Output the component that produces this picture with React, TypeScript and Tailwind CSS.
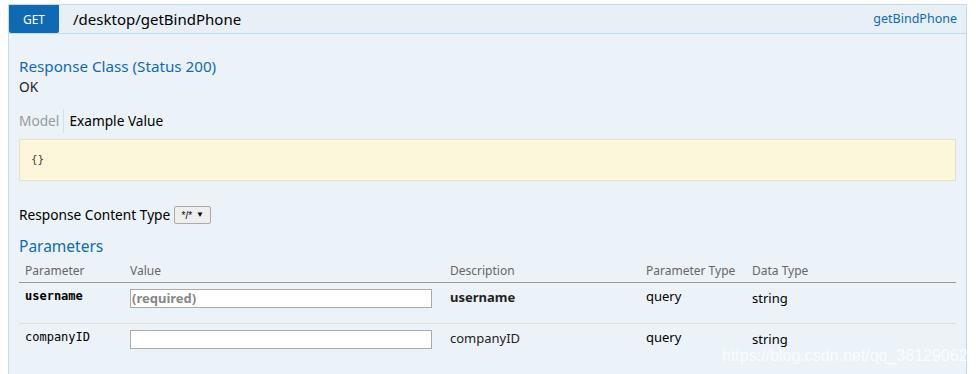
import React from "react";

const sans = { fontFamily: '"Noto Sans", "Open Sans", sans-serif' };

export default function App() {
  return (
    <div className="relative w-[976px] h-[374px] overflow-hidden bg-white pl-[8px] pt-[4px]" style={sans}>
      <div className="w-[959px] flex flex-col h-[372px]">
        {/* header */}
        <div className="h-[30px] border border-[#c3d9ec] bg-[#e7f0f7] flex items-stretch">
          <div className="w-[50px] bg-[#0f6ab4] rounded-bl-[2px] rounded-br-[2px] text-white text-[12px] flex items-center justify-center pt-[1px]">
            GET
          </div>
          <div className="flex-1 flex items-center pl-[14px] text-[15px] text-black leading-none">/desktop/getBindPhone</div>
          <div className="flex items-center pr-[9px] text-[12.5px] text-[#0f6ab4]">getBindPhone</div>
        </div>
        {/* body */}
        <div className="flex-1 border-x border-b border-[#c3d9ec] bg-[#ebf3f9] px-[10px]">
          <div className="mt-[22px] h-[20px] leading-[20px] text-[15.2px] text-[#0f6ab4]">Response Class (Status 200)</div>
          <div className="mt-[2px] h-[18px] leading-[18px] text-[13.7px] text-[#222]">OK</div>
          <div className="mt-[13px] h-[24px] flex items-center text-[13.7px]">
            <span className="text-[#999] pr-[4px]">Model</span>
            <span className="h-[24px] border-l border-[#ddd]" />
            <span className="pl-[5px] text-black">Example Value</span>
          </div>
          <div className="mt-[6px] h-[42px] bg-[#fcf6db] border border-[#e5e0c6] flex items-center pl-[11px] text-[11px] text-[#444]" style={{ fontFamily: '"DejaVu Sans Mono", monospace' }}>
            {"{}"}
          </div>
          <div className="mt-[24px] h-[20px] flex items-center text-[13.7px] text-black">
            <span>Response Content Type</span>
            <span className="ml-[4px] h-[18px] w-[37px] border border-[#aaa] rounded-[2px] bg-[#eee] flex items-center justify-center gap-[4px] text-[10px] text-black" style={{ fontFamily: '"Liberation Sans", sans-serif' }}>
              <span>*/*</span>
              <span className="text-[8px]">▼</span>
            </span>
          </div>
          <div className="mt-[10px] h-[22px] leading-[22px] text-[15.5px] text-[#0f6ab4]">Parameters</div>
          <div className="mt-[2px]">
            <div className="grid grid-cols-[105px_320px_196px_106px_1fr] h-[24px] items-center border-b border-[#999] text-[12px] text-[#666]">
              <div className="px-[6px]">Parameter</div>
              <div className="px-[6px]">Value</div>
              <div className="px-[6px]">Description</div>
              <div className="px-[6px]">Parameter Type</div>
              <div className="px-[6px]">Data Type</div>
            </div>
            <div className="grid grid-cols-[105px_320px_196px_106px_1fr] h-[41px] items-start border-b border-[#ddd] text-[13px] text-black">
              <div className="px-[6px] pt-[4px] font-bold text-[12px]" style={{ fontFamily: '"DejaVu Sans Mono", monospace' }}>username</div>
              <div className="px-[6px] pt-[6px]">
                <div className="w-[302px] h-[19px] border border-[#aaa] bg-white flex items-center px-[1px] text-[13px] font-bold text-[#888]">(required)</div>
              </div>
              <div className="px-[6px] pt-[5px] font-bold text-[#222]">username</div>
              <div className="px-[6px] pt-[4px]">query</div>
              <div className="px-[6px] pt-[6px]">string</div>
            </div>
            <div className="grid grid-cols-[105px_320px_196px_106px_1fr] h-[40px] items-start text-[13px] text-black">
              <div className="px-[6px] pt-[4px] text-[12px]" style={{ fontFamily: '"DejaVu Sans Mono", monospace' }}>companyID</div>
              <div className="px-[6px] pt-[6px]">
                <div className="w-[302px] h-[19px] border border-[#aaa] bg-white" />
              </div>
              <div className="px-[6px] pt-[5px] text-[#222]">companyID</div>
              <div className="px-[6px] pt-[4px]">query</div>
              <div className="px-[6px] pt-[6px]">string</div>
            </div>
          </div>
        </div>
      </div>
      <div className="absolute left-[722px] top-[344px] text-[16px] text-white/75" style={{ fontFamily: '"Liberation Sans", Arial, sans-serif' }}>
        https://blog.csdn.net/qq_38129062
      </div>
    </div>
  );
}
